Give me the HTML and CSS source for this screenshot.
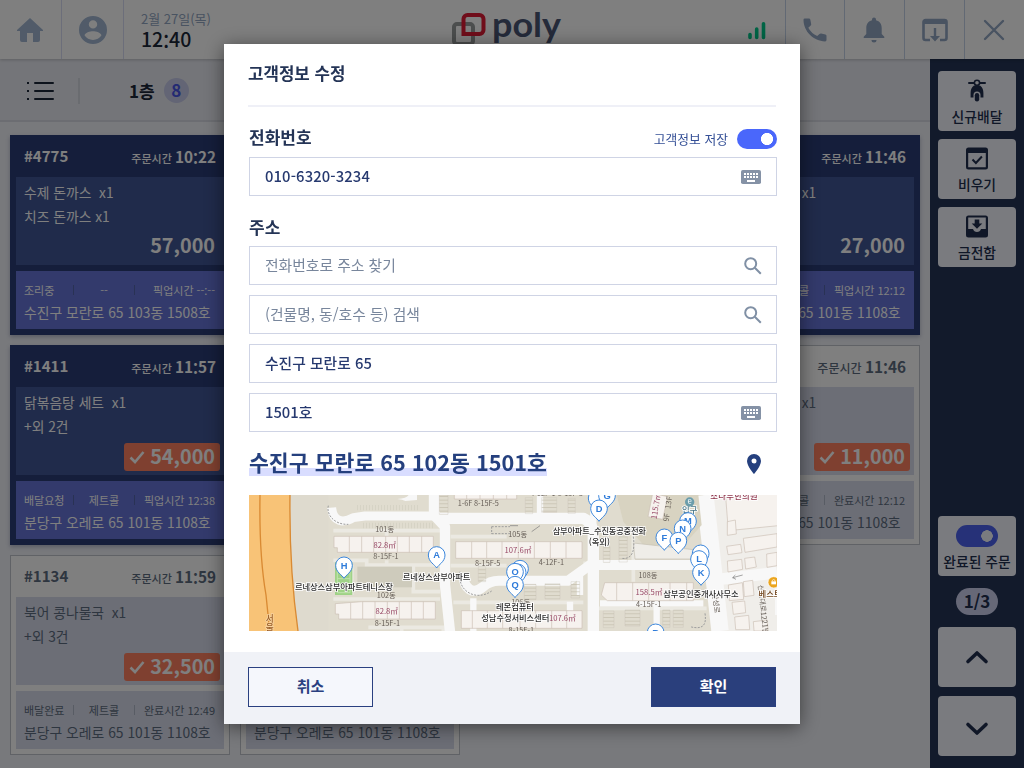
FILE: index.html
```html
<!DOCTYPE html>
<html lang="ko">
<head>
<meta charset="utf-8">
<title>고객정보 수정</title>
<link rel="stylesheet" href="styles.css">
</head>
<body>
<div class="app">
  <header class="topbar">
    <div class="top-cell home"><svg width="28" height="26" viewBox="0 0 28 26"><path d="M14 1 1 13v1h3v9a2 2 0 0 0 2 2h5v-9h6v9h5a2 2 0 0 0 2-2v-9h3v-1z" fill="currentColor"/></svg></div>
    <div class="top-cell user"><svg width="28" height="28" viewBox="0 0 28 28"><path fill="currentColor" fill-rule="evenodd" d="M14 0a14 14 0 1 0 0 28a14 14 0 0 0 0-28zM14 4.2a4.2 4.2 0 1 1 0 8.4a4.2 4.2 0 0 1 0-8.4zM14 24c-3.500 0-6.600-1.700-8.400-4.400c0-2.800 5.600-4.300 8.400-4.300s8.400 1.500 8.400 4.300c-1.800 2.700-4.900 4.400-8.400 4.400z"/></svg></div>
    <div class="clock"><span class="date">2월 27일(목)</span><span class="time">12<i>:</i>40</span></div>
    <div class="logo">
      <svg width="112" height="40" viewBox="0 0 112 40"><rect x="2" y="12" width="19" height="20" rx="3" fill="none" stroke="#989c9c" stroke-width="4"/><path d="M11.500 22V7a4 4 0 0 1 4-4h12a4 4 0 0 1 4 4v11a4 4 0 0 1-4 4z" fill="none" stroke="#e01b35" stroke-width="4"/><text class="logo-text" x="40" y="25" textLength="69" lengthAdjust="spacingAndGlyphs">poly</text></svg>
    </div>
    <div class="signal"><svg width="20" height="20" viewBox="0 0 20 20" stroke="#00c98b" stroke-width="3.600" stroke-linecap="round"><path d="M3 13.500v3M9.700 8v8.500M16.500 2.800v13.700"/></svg></div>
    <div class="top-cell tool phone"><svg width="24" height="24" viewBox="0 0 24 24"><path fill="currentColor" d="M.5 1.800Q.5.500 1.800.500H6Q7 .500 7.300 1.600L8.200 6q.2.900-.5 1.500L5.300 9.800a19 19 0 0 0 8.900 8.300l2.300-2.100q.7-.7 1.600-.5l4.300.9q1.100.300 1.100 1.400v4.300q0 1.400-1.400 1.400C10.500 23 .500 13.500.500 1.800z"/></svg></div>
    <div class="top-cell tool bell"><svg width="22" height="26" viewBox="0 0 22 26"><path fill="currentColor" d="M11 .500a2 2 0 0 0-2 2v.7C5.300 4.200 3.300 7 3.300 11v6L.700 19.800V21h20.600v-1.200L18.700 17v-6c0-4-2-6.800-5.700-7.800v-.7a2 2 0 0 0-2-2zM8.500 23a2.500 2.500 0 0 0 5 0z"/></svg></div>
    <div class="top-cell tool"><svg width="26" height="24" viewBox="0 0 26 24"><path d="M8 22H3.500A2 2 0 0 1 1.500 20V4a2 2 0 0 1 2-2h19a2 2 0 0 1 2 2v16a2 2 0 0 1-2 2H18" fill="none" stroke="currentColor" stroke-width="2.600"/><path d="M2 2.500h22V6H2zM11.800 10h2.400v8H18l-5 5.500L8 18h3.800z" fill="currentColor"/></svg></div>
    <div class="top-cell tool close"><svg width="22" height="22" viewBox="0 0 22 22"><path d="m2 2 18 18M20 2 2 20" stroke="currentColor" stroke-width="2.400" stroke-linecap="round"/></svg></div>
  </header>

  <div class="workspace">
    <main class="orders">
      <div class="floorbar">
        <svg class="list-icon" width="28" height="20" viewBox="0 0 28 20" stroke="#1a2638" stroke-width="2"><path d="M8 2h18M8 10h18M8 18h18" stroke-linecap="round"/><path d="M0 2h2M0 10h2M0 18h2"/></svg>
        <span class="bar-divider"></span>
        <span class="floor-name">1층</span><span class="floor-count">8</span>
      </div>
      <div class="card-grid">
        <article class="card active">
          <div class="card-head"><b>#4775</b><span class="when">주문시간 <b>10<i>:</i>22</b></span></div>
          <div class="card-body"><p>수제 돈까스&nbsp; x1</p><p>치즈 돈까스 x1</p><div class="price">57,000</div></div>
          <div class="card-foot"><div class="meta"><span>조리중</span><span>--</span><span>픽업시간 --<i>:</i>--</span></div><p>수진구 모란로 65 103동 1508호</p></div>
        </article>
        <article class="card active col-4">
          <div class="card-head"><b>#1410</b><span class="when">주문시간 <b>11<i>:</i>46</b></span></div>
          <div class="card-body"><p>닭볶음탕 세트&nbsp; x1</p><div class="price">27,000</div></div>
          <div class="card-foot"><div class="meta"><span>배달요청</span><span>제트콜</span><span>픽업시간 12<i>:</i>12</span></div><p>분당구 오레로 65 101동 1108호</p></div>
        </article>
        <article class="card active">
          <div class="card-head"><b>#1411</b><span class="when">주문시간 <b>11<i>:</i>57</b></span></div>
          <div class="card-body"><p>닭볶음탕 세트&nbsp; x1</p><p>+외 2건</p><div class="price paid"><svg width="16" height="14" viewBox="0 0 16 14"><path d="m1.500 7.500 4.500 4.500L14.500 2"/></svg>54,000</div></div>
          <div class="card-foot"><div class="meta"><span>배달요청</span><span>제트콜</span><span>픽업시간 12<i>:</i>38</span></div><p>분당구 오레로 65 101동 1108호</p></div>
        </article>
        <article class="card done col-4">
          <div class="card-head"><b>#1409</b><span class="when wide">주문시간 <b>11<i>:</i>46</b></span></div>
          <div class="card-body"><p>닭볶음탕 세트&nbsp; x1</p><div class="price paid"><svg width="16" height="14" viewBox="0 0 16 14"><path d="m1.500 7.500 4.500 4.500L14.500 2"/></svg>11,000</div></div>
          <div class="card-foot"><div class="meta"><span>배달완료</span><span>제트콜</span><span>완료시간 12<i>:</i>12</span></div><p>분당구 오레로 65 101동 1108호</p></div>
        </article>
        <article class="card done">
          <div class="card-head"><b>#1134</b><span class="when">주문시간 <b>11<i>:</i>59</b></span></div>
          <div class="card-body"><p>북어 콩나물국&nbsp; x1</p><p>+외 3건</p><div class="price paid"><svg width="16" height="14" viewBox="0 0 16 14"><path d="m1.500 7.500 4.500 4.500L14.500 2"/></svg>32,500</div></div>
          <div class="card-foot"><div class="meta"><span>배달완료</span><span>제트콜</span><span>완료시간 12<i>:</i>49</span></div><p>분당구 오레로 65 101동 1108호</p></div>
        </article>
        <article class="card done">
          <div class="card-head"></div>
          <div class="card-body"></div>
          <div class="card-foot"><div class="meta"></div><p>분당구 오레로 65 101동 1108호</p></div>
        </article>
      </div>
    </main>

    <aside class="sidebar">
      <div class="side-group">
        <div class="side-btn"><svg width="18" height="23" viewBox="0 0 18 23"><path d="M1 4h16" stroke="currentColor" stroke-width="2" stroke-linecap="round"/><circle cx="9" cy="3.800" r="2.600" fill="#f4f6fe" stroke="currentColor" stroke-width="1.600"/><path fill="currentColor" d="M6 6.500h6c2.500 1.500 3.400 4.500 3.400 7.500v4.500H12.500V16a3.500 3.500 0 0 0-7 0v2.500H2.600V14c0-3 .9-6 3.400-7.500z"/><rect x="6.800" y="14" width="4.400" height="8.500" rx="2.200" fill="currentColor"/></svg><span>신규배달</span></div>
        <div class="side-btn"><svg width="22" height="23" viewBox="0 0 22 23"><path fill="currentColor" fill-rule="evenodd" d="M2.500.500h17a2.500 2.500 0 0 1 2.500 2.500v17a2.500 2.500 0 0 1-2.500 2.500h-17A2.500 2.500 0 0 1 0 20V3A2.500 2.500 0 0 1 2.500.500zM2.200 6v14.300h17.600V6z"/><path d="m6.500 12.500 3.400 3.500 6-6.500" fill="none" stroke="currentColor" stroke-width="2"/></svg><span>비우기</span></div>
        <div class="side-btn"><svg width="22" height="23" viewBox="0 0 22 23"><path fill="currentColor" fill-rule="evenodd" d="M2.500.500h17a2.500 2.500 0 0 1 2.500 2.500v17a2.500 2.500 0 0 1-2.500 2.500h-17A2.500 2.500 0 0 1 0 20V3A2.500 2.500 0 0 1 2.500.500zM2.200 2.600V14H7a4.200 4.200 0 0 0 8 0h4.800V2.600z"/><path fill="currentColor" d="M8.700 4.500h4.600v4h3L11 13.800 5.700 8.500h3z"/></svg><span>금전함</span></div>
      </div>
      <div class="side-group">
        <div class="side-btn complete"><span class="switch large"></span><span>완료된 주문</span></div>
        <div class="page-count">1/3</div>
        <div class="side-btn arrow"><svg width="24" height="16" viewBox="0 0 24 16"><path d="m3 12.500 9-8.500 9 8.500"/></svg></div>
        <div class="side-btn arrow down"><svg width="24" height="16" viewBox="0 0 24 16"><path d="m3 3.500 9 8.500 9-8.500"/></svg></div>
      </div>
    </aside>
  </div>
</div>

<div class="overlay">
  <section class="modal">
    <h1>고객정보 수정</h1>
    <div class="modal-body">
      <div class="row phone-row"><h2>전화번호</h2><span class="save">고객정보 저장</span><span class="switch"></span></div>
      <div class="field"><span class="digits">010-6320-3234</span><svg class="kbd" width="20" height="14" viewBox="0 0 20 14"><rect width="20" height="14" rx="1.800" fill="#8592a6"/><path d="M3 4h14M3 7h14" stroke="#fff" stroke-width="2" stroke-dasharray="2 1"/><path d="M6 11h8" stroke="#fff" stroke-width="2"/></svg></div>
      <h2 class="addr-title">주소</h2>
      <div class="fields">
        <div class="field hint"><span>전화번호로 주소 찾기</span><svg width="18" height="18" viewBox="0 0 18 18"><circle cx="6.700" cy="6.700" r="5.500"/><path d="m10.800 10.800 6 6"/></svg></div>
        <div class="field hint"><span>(건물명, 동/호수 등) 검색</span><svg width="18" height="18" viewBox="0 0 18 18"><circle cx="6.700" cy="6.700" r="5.500"/><path d="m10.800 10.800 6 6"/></svg></div>
        <div class="field"><span>수진구 모란로 65</span></div>
        <div class="field"><span>1501호</span><svg class="kbd" width="20" height="14" viewBox="0 0 20 14"><rect width="20" height="14" rx="1.800" fill="#8592a6"/><path d="M3 4h14M3 7h14" stroke="#fff" stroke-width="2" stroke-dasharray="2 1"/><path d="M6 11h8" stroke="#fff" stroke-width="2"/></svg></div>
      </div>
      <div class="row result"><strong>수진구 모란로 65 102동 1501호</strong><svg width="14" height="20" viewBox="0 0 14 20"><path fill="#25407e" fill-rule="evenodd" d="M7 0a7 7 0 0 0-7 7c0 5.200 7 13 7 13s7-7.800 7-13a7 7 0 0 0-7-7zm0 4.500a2.500 2.500 0 1 1 0 5 2.500 2.500 0 0 1 0-5z"/></svg></div>
      <svg class="map" width="528" height="136" viewBox="27 30 1584 408">
        <defs>
          <g id="pin"><path d="M0 38C-5 28-25 20-25-1a25 25 0 0 1 50 0C25 20 5 28 0 38z" fill="#fff" stroke="#3b86dc" stroke-width="3"/></g>
          <pattern id="stalls" width="9" height="60" patternUnits="userSpaceOnUse"><path d="M0 0v60" stroke="#c4bfb2" stroke-width="2"/></pattern>
          <pattern id="bays" width="40" height="11" patternUnits="userSpaceOnUse"><path d="M0 1h40" stroke="#bdb8a6" stroke-width="2"/></pattern>
        </defs>
        <rect x="27" y="30" width="1584" height="408" fill="#e0dccf"/>
        <!-- outer ground left and right -->
        <path d="M27 30h238v408H27z" fill="#dedace"/>
        <path d="M1390 30h221v408H1415z" fill="#f0eeea"/>
        <!-- highway -->
        <path d="M27 30H150C148 180 156 310 174 438H27z" fill="#f8c377"/>
        <path d="M150 30C148 180 156 310 174 438M60 30C58 150 64 250 78 330L89 438" fill="none" stroke="#d98a33" stroke-width="4"/>
        <!-- minor lanes -->
        <g fill="none" stroke="#ebe9e2" stroke-width="11"><path d="M280 137H600M280 226H380V240H600M335 240V330M520 245V320H600M280 342H600M385 427H610V438M632 155H800M632 242H800M640 352H1030M440 137v30M440 226v14M485 430v20M1030 235H1395M1050 370H1400M1180 40V290"/></g>
        <rect x="352" y="245" width="164" height="62" fill="#cecbbc"/>
        <path d="M285 232h52v98h-52z" fill="#9fd287"/>
        <path d="M292 239h38v84h-38zM292 281h38" fill="none" stroke="#c1e3ae" stroke-width="3"/>
        <!-- streets -->
        <g fill="none" stroke="#f8f8f8" stroke-linecap="butt" stroke-linejoin="round">
          <path d="M275 68C278 112 310 115 340 98L375 93H600" stroke-width="27"/>
          <path d="M582 30V90L615 125V300L630 440" stroke-width="31"/>
          <path d="M590 100H1030Q1055 110 1060 145V438" stroke-width="34"/>
          <path d="M670 265C670 315 700 330 730 305Q750 286 780 287H985L1050 240H1395" stroke-width="30"/>
          <path d="M1060 60V290M700 440V340M900 30V100M1020 270V330M1080 355H1390M1250 360V440M990 350V430" stroke-width="19"/>
          <path d="M1395 30 1440 438" stroke-width="52"/>
          <path d="M1420 285 1611 263" stroke-width="35"/>
          <path d="M1620 310V390" stroke-width="30"/>
        </g>
        <path d="M472 42q28-2 34-12h25v15l-35 3-10-4z" fill="#f7f7f7"/>
        <!-- buildings -->
        <g fill="#f6f2ee" stroke="#cbbfb5" stroke-width="2">
          <path d="M282 154H580V202H292V188H282z"/><path d="M328 154v48M365 154v48M401 154v48M437 154v48M472 154v48M508 154v48M545 154v48"/>
          <path d="M286 356 365 350H586V402H296V387H286z"/><path d="M332 354v48M368 350v52M405 350v52M442 350v52M478 350v52M514 350v52M550 350v52"/>
          <path d="M643 10H830V42H643z"/><path d="M680 10v32M720 10v32M760 10v32M800 10v32"/>
          <path d="M647 170H1026V220H647z"/><path d="M695 170v50M740 170v50M786 170v50M835 170v50M883 170v50M931 170v50M978 170v50"/>
          <path d="M664 377H1026V430H664z"/><path d="M697 377v53M742 377v53M788 377v53M840 377v53M887 377v53M935 377v53M980 377v53"/>
          <path d="M1094 293H1360V347H1102L1084 330z"/><path d="M1130 293v54M1178 293v54M1226 293v54M1290 293v54M1340 293v54"/>
          <path d="m1455 10 160-8v120l-150 15z"/><path d="m1510 160 101-14v40l-96 16zM1462 110l24-5 3 42-27 4zM1460 184l42-6 4 25-42 6zM1462 228l43-5 3 30-44 8zM1514 220l30-4 5 30-32 6zM1580 207l31-5v40l-30 5z"/>
          <path d="m1465 300 42-7 4 50-43 4zM1476 352l38-4 3 35-37 5zM1484 396l42-5 3 43h-42zM1510 290l28-4 4 45-29 4zM1540 410l42-5 2 33h-42z"/>
        </g>
        <path d="M1130 30H1375L1385 120 1340 170 1215 185 1150 110z" fill="#d8d3c1"/>
        <path d="M1238 25 1283 35 1268 103 1224 95z" fill="#f6f2ee" stroke="#cbbfb5" stroke-width="2"/>
        <path d="M1180 174 1370 195V222H1185z" fill="#efede8" stroke="#c4bfb2" stroke-width="2"/>
        <!-- parking -->
        <g fill="url(#stalls)"><path d="M350 60H540V76H350zM367 113H585V130H367z"/></g>
        <g fill="url(#bays)" stroke="#c4bfb2" stroke-width="1"><path d="M598 30h26v58h-26zM715 245h22v45h-22zM856 38h22v48h-22zM905 38h45v44h-45zM984 40h22v45h-22zM1090 185h20v47h-20zM1137 155h25v76h-25zM853 298h35v46h-35zM915 296h45v46h-45zM993 290h26v49h-26zM1090 378h32v50h-32zM1155 375h45v48h-45zM1268 375h22v52h-22zM1300 375h30v52h-30z"/></g>
        <g fill="none" stroke="#9d9d9d" stroke-width="3" stroke-dasharray="6 4"><path d="M265 62C258 90 285 120 325 118M660 260C650 320 710 350 755 318M755 125h55M755 146h55M755 125v22M1180 155C1185 190 1180 225 1145 220M1395 385C1400 420 1390 435 1350 425"/></g>
        <g fill="none" stroke="#777" stroke-width="2"><path d="m1508 270-30 8m8-8-8 8 10 5M810 122h24M900 122l-25 18"/></g>
        <!-- captions -->
        <g class="m-cap"><text x="434" y="142">101동</text><text x="438" y="222" textLength="76">8-15F-1</text><text x="439" y="340">102동</text><text x="442" y="424" textLength="76">8-15F-1</text><text x="715" y="63" textLength="123">1-6F 8-15F-5</text><text x="743" y="243" textLength="76">8-15F-5</text><text x="833" y="156">105동</text><text x="934" y="240" textLength="76">4-12F-1</text><text x="1224" y="279">108동</text><text x="1226" y="367" textLength="76">4-15F-1</text><text x="842" y="360">106동</text><text x="844" y="445">8-15F-1</text><text x="950" y="34">4-12F-1 8-15F-3</text><text transform="translate(1291 73) rotate(-82)" textLength="76">9F&#160; 13F</text><text transform="translate(1421 355) rotate(84)">산성로</text><text transform="translate(1562 375) rotate(84)">산성대로1221번</text></g>
        <g class="m-area"><text x="434" y="189">82.8㎡</text><text x="440" y="387">82.8㎡</text><text x="834" y="203">107.6㎡</text><text x="967" y="407">107.6㎡</text><text x="1227" y="329">158.5㎡</text><text transform="translate(1256 65) rotate(-80)">115.7m</text></g>
        <g class="m-place"><text x="312" y="316" textLength="294">르네상스삼부아파트테니스장</text><text x="590" y="285" textLength="203">르네상스삼부아파트</text><text x="1078" y="147" textLength="280">삼부아파트_수진동공중전화</text><text x="1078" y="179">(옥외)</text><text x="825" y="375" textLength="114">레몬컴퓨터</text><text x="826" y="408" textLength="204">성남수정서비스센터</text><text x="1383" y="337" textLength="226">삼부공인중개사사무소</text><text class="station" x="1349" y="85">입구</text><text class="clinic" x="1482" y="41" textLength="142">소나무한의원</text><text class="store" x="1590" y="336">베스트</text><text class="road" x="89" y="411">서</text><text class="road" x="89" y="438">울</text></g>
        <circle cx="1349" cy="51" r="14" fill="#6b9dab"/><text class="m-symbol" x="1349" y="58">e</text>
        <circle cx="1601" cy="292" r="17" fill="#eba51e" stroke="#fff" stroke-width="2"/><path d="M1594 289h14v9h-14z" fill="#fff"/><path d="M1597 289v-3q4-5 8 0v3" fill="none" stroke="#fff" stroke-width="2"/>
        <g class="pins">
          <g transform="translate(312 242)"><use href="#pin"/><text y="9">H</text></g>
          <g transform="translate(590 211)"><use href="#pin"/><text y="9">A</text></g>
          <g transform="translate(1070 40)"><use href="#pin"/></g>
          <g transform="translate(1101 32)"><use href="#pin"/><text y="9">G</text></g>
          <g transform="translate(1077 71)"><use href="#pin"/><text y="9">D</text></g>
          <g transform="translate(840 252)"><use href="#pin"/></g>
          <g transform="translate(833 263)"><use href="#pin"/></g>
          <g transform="translate(825 261)"><use href="#pin"/><text y="9">O</text></g>
          <g transform="translate(825 300)"><use href="#pin"/><text y="9">Q</text></g>
          <g transform="translate(1344 109)"><use href="#pin"/><text y="7">M</text></g>
          <g transform="translate(1328 131)"><use href="#pin"/><text y="9">N</text></g>
          <g transform="translate(1273 158)"><use href="#pin"/><text y="9">F</text></g>
          <g transform="translate(1315 168)"><use href="#pin"/><text y="9">P</text></g>
          <g transform="translate(1382 206)"><use href="#pin"/></g>
          <g transform="translate(1377 223)"><use href="#pin"/><text y="9">L</text></g>
          <g transform="translate(1383 263)"><use href="#pin"/><text y="9">K</text></g>
          <g transform="translate(1247 443)"><use href="#pin"/><text y="9">R</text></g>
        </g>
      </svg>
    </div>
    <footer class="modal-foot"><button class="btn">취소</button><button class="btn primary">확인</button></footer>
  </section>
</div>
</body>
</html>
```

FILE: styles.css
```css
* { box-sizing: border-box; }
body { margin: 0; font-family: "Noto Sans CJK KR", "Noto Sans", sans-serif; color: #1a2638; overflow: hidden; }
h1, h2, p { margin: 0; }
svg { display: block; flex: none; }
/* lowers the colon onto the baseline between digits */
i { display: inline-block; font-style: normal; transform: translateY(.1em); }

.app { width: 1024px; height: 768px; display: flex; flex-direction: column; background: #f0f2f8; }

.topbar { height: 59px; flex: none; display: flex; background: #fff; box-shadow: 0 1px 3px rgba(0,0,0,.2); z-index: 1; }
.top-cell { display: flex; align-items: center; justify-content: center; color: #a2b7d3; border-right: 1px solid #d8dcf4; width: 62px; }
.tool { border-right: 0; border-left: 1px solid #c4d3e8; color: #92a6c2; width: 60px; }
.phone { width: 59px; }
.bell, .close { padding-right: 2px; }
.home { padding: 1px 2px 0 0; }
.clock { width: 328px; padding: 9px 0 0 17px; display: flex; flex-direction: column; }
.date { font-size: 13px; line-height: 19px; color: #92a6c2; }
.time { font-size: 19.500px; line-height: 21px; font-weight: 500; }
.logo { width: 295px; padding-top: 12px; }
.logo-text { font: 700 34px Lato, sans-serif; fill: #4a5675; }
.signal { width: 38px; padding-top: 21px; }

.workspace { flex: 1; display: flex; min-height: 0; }
.orders { width: 930px; }
.floorbar { height: 63px; display: flex; align-items: center; background: #e9ebf2; border-bottom: 2px solid #d8dbe4; padding: 2px 0 0 27px; }
.bar-divider { width: 2px; height: 26px; margin: 0 49px 0 23px; background: #d5d8e0; }
.floor-name { font-size: 17px; font-weight: 700; }
.floor-count { width: 25px; height: 25px; margin-left: 9px; border-radius: 50%; background: #c6caea; color: #4755e6; font-size: 17px; line-height: 24px; font-weight: 700; text-align: center; }

.card-grid { display: grid; grid-template-columns: repeat(4, 220px); grid-auto-rows: 200px; gap: 10px; padding: 13px 10px; }
.col-4 { grid-column: 4; }
.card { display: flex; flex-direction: column; gap: 6px; padding: 0 6px 6px; background: #2a3c76; color: #fff; box-shadow: 0 2px 4px rgba(40,50,100,.3); }
.card-head { height: 42px; margin-bottom: -6px; padding: 0 8px 1px; display: flex; align-items: center; justify-content: space-between; font-size: 15px; }
.card-head > b, .when b { font-weight: 700; }
.when { font-size: 11px; font-weight: 500; }
.when b { font-size: 15.300px; }
.when.wide { font-size: 12px; }
.card-body { position: relative; height: 88px; padding: 3px 8px; background: #405696; font-size: 13.800px; line-height: 24px; }
.price { position: absolute; right: 4px; bottom: 6px; height: 28px; padding-right: 5px; font-size: 19.800px; line-height: 27px; font-weight: 700; }
.paid { display: flex; align-items: center; justify-content: space-between; bottom: 4px; width: 96px; padding: 0 5px 4px; border-radius: 3px; background: #ff8060; }
.paid svg { fill: none; stroke: #fff; stroke-width: 2.600; margin-top: 4px; }
.card-foot { height: 58px; padding: 9px 8px 0; background: #6674d8; }
.card-foot p { font-size: 13.850px; line-height: 24px; white-space: nowrap; }
.meta { height: 20px; display: grid; grid-template-columns: 49px 62px 1fr; align-items: center; font-size: 11px; line-height: 10px; white-space: nowrap; }
.meta span:nth-child(2) { text-align: center; border: 1px solid #5364a9; border-width: 0 1px; }
.meta span:nth-child(3) { text-align: right; padding-right: 1px; }
.card.done { background: #fff; color: #5d6c80; border: 1px solid #c0c5cc; padding: 0 5px 5px; box-shadow: none; }
.done .card-head { height: 41px; padding-bottom: 2px; }
.done .card-body, .done .card-foot { background: #d8dcec; }
.done .price { color: #fff; }
.done .meta span:nth-child(2) { border-color: #b0b8c8; }

.sidebar { width: 94px; padding: 12px 8px; background: #243456; display: flex; flex-direction: column; justify-content: space-between; }
.side-group { display: flex; flex-direction: column; gap: 8px; }
.side-btn { height: 60px; padding: 8px 0 2px; border-radius: 4px; background: #f4f6fe; color: #202e4e; display: flex; flex-direction: column; align-items: center; justify-content: space-between; font-size: 13.800px; line-height: 25px; font-weight: 500; white-space: nowrap; }
.page-count { align-self: center; width: 42px; height: 27px; margin: 4px 0; border-radius: 14px; background: #ccd0ee; color: #202e4e; font-size: 17px; line-height: 26px; font-weight: 700; text-align: center; }
.arrow { padding: 0; justify-content: center; }
.arrow.down { margin-top: 1px; padding-top: 5px; }
.arrow svg { fill: none; stroke: #202e4e; stroke-width: 3.600; stroke-linecap: round; stroke-linejoin: round; }
.switch { display: block; flex: none; width: 40px; height: 20px; border-radius: 10px; background: radial-gradient(circle at 30px 10px, #fff 5.800px, #4a67fb 6.300px); }
.switch.large { width: 42px; height: 22px; border-radius: 11px; background: radial-gradient(circle at 31px 11px, #f4f6fe 5.500px, #4c62f0 6px); }
.complete { padding-top: 9px; }

.overlay { position: fixed; inset: 0; z-index: 5; background: rgba(0,0,0,.5); padding: 44px 224px; }
.modal { width: 576px; height: 680px; background: #fff; box-shadow: 0 3px 18px rgba(0,0,0,.5); color: #233663; display: flex; flex-direction: column; }
.modal h1 { height: 63px; margin: 0 24px; padding-top: 16px; border-bottom: 2px solid #eff0f7; font-size: 16.800px; line-height: 26px; font-weight: 700; color: #243456; }
.modal-body { margin: 0 23px 0 25px; }
.row { display: flex; align-items: center; }
.phone-row { height: 50px; padding-top: 14px; }
.modal h2 { font-size: 17px; line-height: 24px; font-weight: 700; color: #243456; }
.phone-row h2 { padding-bottom: 4px; }
.save { margin: 0 9px 0 auto; padding-bottom: 1px; font-size: 12.800px; color: #344f96; }
.field { height: 39px; padding: 0 15px; border: 1px solid #cfd4e5; display: flex; align-items: center; justify-content: space-between; font-size: 14.800px; line-height: 35px; font-weight: 500; color: #26396f; }
.field span { padding-bottom: 2px; }
.digits { letter-spacing: .12px; }
.hint { font-weight: 400; color: #78869c; padding-right: 14px; }
.hint svg { fill: none; stroke: #8090a5; stroke-width: 2; }
.addr-title { padding: 19px 0 7px; }
.fields { display: flex; flex-direction: column; gap: 10px; }
.result { height: 63px; justify-content: space-between; padding-right: 16px; }
.result strong { margin-bottom: 4px; font-size: 21.600px; line-height: 28px; font-weight: 700; color: #25407e; white-space: nowrap; background: linear-gradient(#d9ddff, #d9ddff) 0 20px / 100% 8px no-repeat; }
.modal-foot { height: 72px; margin-top: auto; padding: 15px 24px; background: #f0f2f7; display: flex; justify-content: space-between; }
.btn { width: 125px; height: 40px; padding: 0 0 4px; border: 1px solid #2a4080; background: #f5f7fc; color: #2a4080; font: 700 15px "Noto Sans CJK KR", sans-serif; }
.primary { background: #2a3f7c; color: #fff; }

.map text { text-anchor: middle; }
.m-cap text { font-size: 22px; fill: #665e57; }
.m-area text { font-size: 23px; fill: #974765; }
.m-place text { font-size: 25px; font-weight: 500; fill: #2d2d2d; stroke: #fff; stroke-width: 5px; paint-order: stroke; }
.m-place .station { fill: #487585; }
.m-place .clinic { fill: #8e344b; }
.m-place .store { fill: #72461e; }
.m-place .road { font-size: 26px; fill: #9b602a; stroke: #f8d39f; }
.map .m-symbol { font-size: 23px; fill: #fff; }
.map .pins text { font: 700 28px "Liberation Sans", sans-serif; fill: #2f7cda; }
```
